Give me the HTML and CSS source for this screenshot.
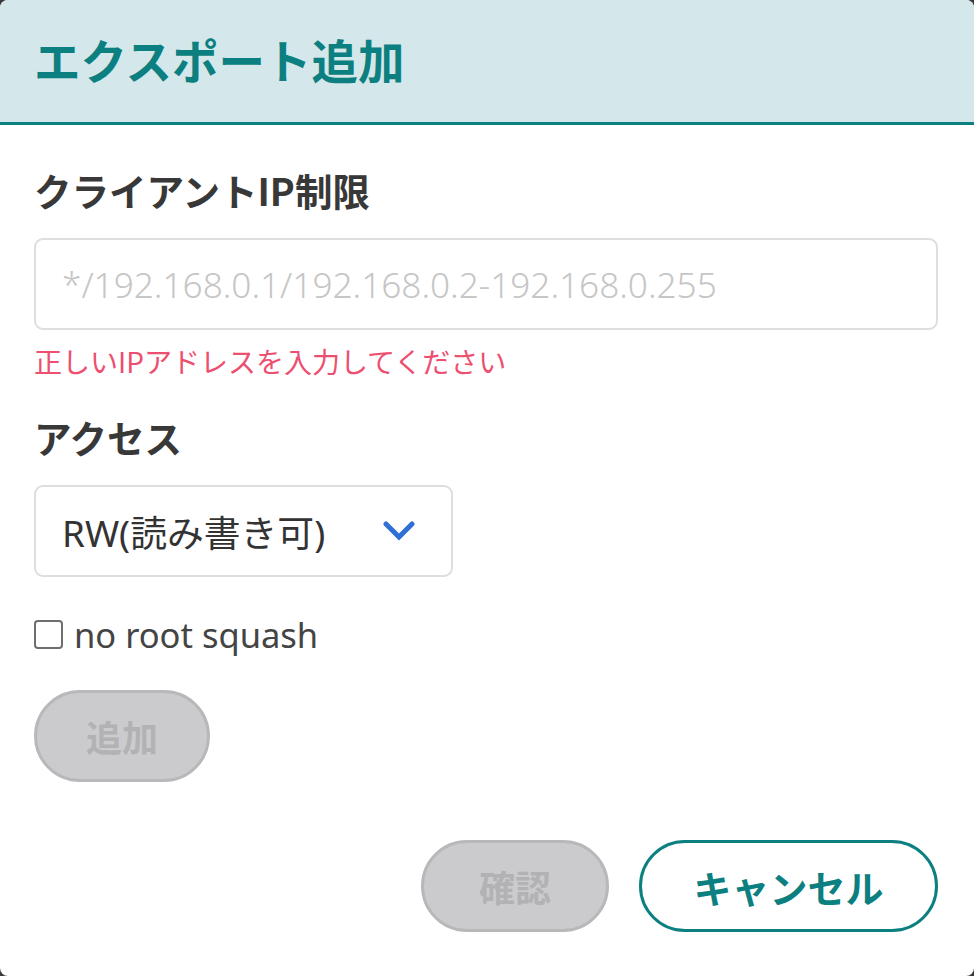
FILE: index.html
```html
<!DOCTYPE html>
<html lang="ja">
<head>
<meta charset="utf-8">
<title>エクスポート追加</title>
<link rel="stylesheet" href="styles.css">
</head>
<body>
<div class="dialog">
  <div class="dialog-header">
    <h1 class="dialog-title">エクスポート追加</h1>
  </div>
  <div class="dialog-body">
    <div class="field-label">クライアントIP制限</div>
    <div class="text-input"><span class="placeholder">*/192.168.0.1/192.168.0.2-192.168.0.255</span></div>
    <div class="error-text">正しいIPアドレスを入力してください</div>
    <div class="field-label label-access">アクセス</div>
    <div class="select-box">
      <span class="select-value">RW(読み書き可)</span>
      <svg class="chevron" width="32" height="22" viewBox="0 0 32 22"><polyline points="3,4 16,17 29,4" fill="none" stroke="#2f6fd6" stroke-width="5" stroke-linejoin="miter" stroke-linecap="round"/></svg>
    </div>
    <label class="check-row"><span class="checkbox"></span><span class="check-text">no root squash</span></label>
    <div class="add-row"><span class="btn btn-disabled btn-add">追加</span></div>
    <div class="footer">
      <span class="btn btn-disabled btn-confirm">確認</span>
      <span class="btn btn-outline btn-cancel">キャンセル</span>
    </div>
  </div>
</div>
</body>
</html>
```
FILE: styles.css
```css
html, body {
  margin: 0;
  padding: 0;
  background: #3a3a3a;
}
body {
  font-family: "Noto Sans CJK JP", "Noto Sans", sans-serif;
  width: 974px;
  height: 976px;
  overflow: hidden;
}
.dialog {
  width: 974px;
  height: 976px;
  background: #ffffff;
  border-radius: 8px;
  overflow: hidden;
}
.dialog-header {
  height: 122px;
  background: #d4e7ea;
  border-bottom: 3px solid #0c7f80;
  display: flex;
  align-items: center;
  padding-left: 34px;
}
.dialog-title {
  margin: 0 0 4px 0;
  font-size: 46.5px;
  font-weight: 700;
  color: #0c7f80;
  line-height: 1;
}
.dialog-body {
  padding: 38px 36px 0 34px;
  display: flex;
  flex-direction: column;
}
.field-label {
  font-size: 37.5px;
  font-weight: 700;
  color: #383838;
  line-height: 54px;
}
.text-input {
  margin-top: 21px;
  height: 92px;
  box-sizing: border-box;
  border: 2px solid #dedede;
  border-radius: 9px;
  padding-left: 26px;
  display: flex;
  align-items: center;
}
.placeholder {
  font-family: "Noto Sans", "Noto Sans CJK JP", sans-serif;
  font-weight: 300;
  font-size: 35.2px;
  color: #c6c6c6;
}
.error-text {
  margin-top: 10px;
  font-size: 28px;
  line-height: 42px;
  color: #ec4f6f;
}
.label-access {
  margin-top: 28px;
}
.select-box {
  margin-top: 21px;
  width: 419px;
  height: 92px;
  box-sizing: border-box;
  border: 2px solid #dedede;
  border-radius: 9px;
  padding: 0 36px 0 26px;
  display: flex;
  align-items: center;
  justify-content: space-between;
}
.select-value {
  font-family: "Noto Sans", "Noto Sans CJK JP", sans-serif;
  font-size: 36.8px;
  color: #333333;
}
.chevron {
  display: block;
}
.check-row {
  margin-top: 30px;
  height: 54px;
  display: flex;
  align-items: center;
}
.checkbox {
  width: 29px;
  height: 29px;
  box-sizing: border-box;
  border: 2px solid #6e6e6e;
  border-radius: 4px;
  background: #fff;
}
.check-text {
  margin-left: 11px;
  font-family: "Noto Sans", "Noto Sans CJK JP", sans-serif;
  font-size: 34.5px;
  color: #444444;
}
.add-row {
  margin-top: 29px;
  display: flex;
}
.btn {
  height: 92px;
  box-sizing: border-box;
  border-radius: 46px;
  display: inline-flex;
  align-items: center;
  justify-content: center;
  font-size: 36px;
  font-weight: 700;
}
.btn-disabled {
  background: #cbcbce;
  border: 3px solid #b8b8bb;
  color: #b2b2b5;
}
.btn-add {
  width: 176px;
}
.footer {
  margin-top: 58px;
  display: flex;
  justify-content: flex-end;
  gap: 30px;
}
.btn-confirm {
  width: 188px;
}
.btn-outline {
  background: #ffffff;
  border: 3px solid #0c7f80;
  color: #0c7f80;
}
.btn-cancel {
  width: 299px;
  font-size: 38px;
}
```
